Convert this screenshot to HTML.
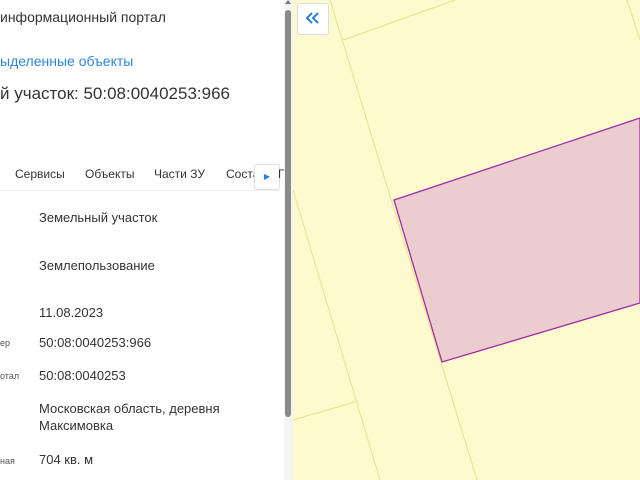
<!DOCTYPE html>
<html><head><meta charset="utf-8"><style>
body{margin:0;width:640px;height:480px;overflow:hidden;position:relative;background:#fff;font-family:"Liberation Sans",sans-serif;color:#333}
.t{position:absolute;white-space:nowrap}
</style></head><body>
<svg style="position:absolute;left:0;top:0" width="640" height="480">
<rect x="293" y="0" width="347" height="480" fill="#fefad0"/>
<g stroke="#ece58f" stroke-width="1.2" fill="none">
<line x1="330" y1="0" x2="477" y2="480"/>
<line x1="343" y1="40" x2="455" y2="0"/>
<line x1="627" y1="0" x2="640" y2="40"/>
<line x1="293" y1="190" x2="380" y2="480"/>
<line x1="293" y1="420" x2="358" y2="401"/>
</g>
<polygon points="394,200 640,118 640,303 442,362" fill="#ebcdd0" stroke="#a22aa6" stroke-width="1.3"/>
<rect x="284" y="0" width="9" height="480" fill="#f4f4f4"/>
<rect x="285" y="10" width="6" height="407" rx="3" fill="#8a8a8a"/>
<polygon points="288,0 285,4 291,4" fill="#777"/>
</svg>
<div style="position:absolute;left:297px;top:3px;width:30px;height:30px;background:#fff;border:1px solid #ddd;border-radius:3px"></div>
<svg style="position:absolute;left:306px;top:12px" width="14" height="12"><path d="M6 1L1 6L6 11M12 1L7 6L12 11" stroke="#2a7de1" stroke-width="2" fill="none"/></svg>
<div class="t" style="left:0;top:9px;font-size:14px">информационный портал</div>
<div class="t" style="left:0;top:53px;font-size:14px;color:#2b86e6">ыделенные объекты</div>
<div class="t" style="left:0;top:84px;font-size:17px;color:#333">й участок: 50:08:0040253:966</div>
<div class="t" style="left:15px;top:167px;font-size:12px">Сервисы</div>
<div class="t" style="left:85px;top:167px;font-size:12px">Объекты</div>
<div class="t" style="left:154px;top:167px;font-size:12px">Части ЗУ</div>
<div class="t" style="left:226px;top:167px;font-size:12px">Соста</div>
<div style="position:absolute;left:254px;top:164px;width:24px;height:24px;background:#fff;border:1px solid #ddd;border-radius:3px;font-size:8px;color:#2a7de1;text-align:center;line-height:24px">▶</div>
<div class="t" style="left:278px;top:167px;font-size:12px">Г</div>
<div style="position:absolute;left:0;top:190px;width:282px;height:1px;background:#eee"></div>
<div class="t" style="left:39px;top:210px;font-size:13px">Земельный участок</div>
<div class="t" style="left:39px;top:258px;font-size:13px">Землепользование</div>
<div class="t" style="left:39px;top:305px;font-size:13px">11.08.2023</div>
<div class="t" style="left:0;top:338px;font-size:9px;color:#555">ер</div>
<div class="t" style="left:39px;top:335px;font-size:13px">50:08:0040253:966</div>
<div class="t" style="left:0;top:371px;font-size:9px;color:#555">отал</div>
<div class="t" style="left:39px;top:368px;font-size:13px">50:08:0040253</div>
<div class="t" style="left:39px;top:401px;font-size:13px">Московская область, деревня</div>
<div class="t" style="left:39px;top:418px;font-size:13px">Максимовка</div>
<div class="t" style="left:0;top:456px;font-size:9px;color:#555">ная</div>
<div class="t" style="left:39px;top:452px;font-size:13px">704 кв. м</div>
</body></html>
